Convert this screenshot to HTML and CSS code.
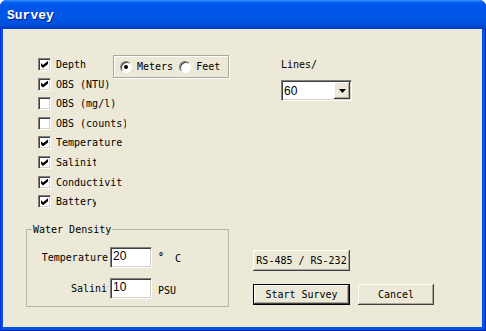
FILE: index.html
```html
<!DOCTYPE html>
<html lang="en">
<head>
    <meta charset="UTF-8"/>
    <title>Survey</title>
    <link rel="stylesheet" href="styles.css">
</head>
<body>
    <div class="window">
        <div class="titlebar"><span class="title">Survey</span></div>
        <div class="client">
            <div class="left">
                <div class="top">
                    <ul class="checks">
                        <li class="check on"><span class="box"></span><span class="label">Depth</span></li>
                        <li class="check on"><span class="box"></span><span class="label">OBS (NTU)</span></li>
                        <li class="check"><span class="box"></span><span class="label">OBS (mg/l)</span></li>
                        <li class="check"><span class="box"></span><span class="label clip-counts">OBS (counts)</span></li>
                        <li class="check on"><span class="box"></span><span class="label">Temperature</span></li>
                        <li class="check on"><span class="box"></span><span class="label clip-short">Salinity</span></li>
                        <li class="check on"><span class="box"></span><span class="label clip-long">Conductivity</span></li>
                        <li class="check on"><span class="box"></span><span class="label clip-short">Battery</span></li>
                    </ul>
                    <div class="units">
                        <span class="radio on"></span><span class="radio-label">Meters</span>
                        <span class="radio feet"></span><span class="radio-label">Feet</span>
                    </div>
                </div>

                <fieldset class="density">
                    <legend>Water Density</legend>
                    <div class="density-grid">
                        <span class="field-label">Temperature</span>
                        <span class="field">20</span>
                        <span class="unit"><span class="deg">°</span>C</span>

                        <span class="field-label"><span class="clip-salinity">Salinity</span></span>
                        <span class="field">10</span>
                        <span class="unit unit-low">PSU</span>
                    </div>
                </fieldset>
            </div>

            <div class="right">
                <div class="lines">
                    <div class="lines-label">Lines/</div>
                    <div class="combo">
                        <span class="combo-value">60</span>
                        <span class="combo-drop">
                            <svg width="7" height="4" viewBox="0 0 7 4"><path d="M0 0h7L3.5 4z" fill="#000"/></svg>
                        </span>
                    </div>
                </div>

                <div class="buttons">
                    <button class="btn btn-wide">RS-485 / RS-232</button>
                    <div class="btn-row">
                        <button class="btn btn-default">Start Survey</button>
                        <button class="btn btn-cancel">Cancel</button>
                    </div>
                </div>
            </div>
        </div>
    </div>
</body>
</html>
```

FILE: styles.css
```css
body {
    margin: 0;
    background: #fff;
    font-family: "DejaVu Sans Mono", monospace;
    font-size: 10px;
    color: #000;
}

.window {
    width: 486px;
    height: 331px;
    display: flex;
    flex-direction: column;
    background: #0054e3;
    border-radius: 7px 7px 0 0;
    box-shadow: inset 1px 0 #0831d9, inset -1px 0 #001ea0, inset 0 -1px #001ea0;
}

.titlebar {
    height: 29px;
    flex: none;
    display: flex;
    align-items: center;
    padding: 2px 0 0 7px;
    box-sizing: border-box;
    border-radius: 7px 7px 0 0;
    background: linear-gradient(to bottom,
        #3d95ff 0, #0a66f5 2px, #0058ee 4px, #0055e8 10px,
        #0056e6 18px, #004fdc 24px, #0044cf 27px, #003dc0 29px);
}

.title {
    font-family: "Liberation Mono", monospace;
    font-weight: bold;
    font-size: 13px;
    color: #fff;
    text-shadow: 1px 1px #0a1a8a;
}

.client {
    flex: 1;
    margin: 0 4px 4px 3px;
    background: #ece9d8;
    display: flex;
}

/* left side: checkboxes, units, water density */
.left {
    width: 237px;
    padding-left: 23px;
    box-sizing: border-box;
}

.top {
    display: flex;
    align-items: flex-start;
    padding: 29px 0 0 12px;
}

.checks {
    list-style: none;
    margin: 0;
    padding: 0;
    width: 75px;
    flex: none;
}

.check {
    height: 19.6px;
    display: flex;
    align-items: flex-start;
}

.box {
    width: 13px;
    height: 13px;
    flex: none;
    box-sizing: border-box;
    background: #fff;
    border: 1px solid;
    border-color: #808080 #fff #fff #808080;
    box-shadow: inset 1px 1px #404040, inset -1px -1px #d4d0c8;
    position: relative;
}

.check.on .box::after {
    content: "";
    position: absolute;
    left: 2px;
    top: 2px;
    width: 7px;
    height: 7px;
    background: #000;
    clip-path: polygon(0 28%, 28% 57%, 100% 0, 100% 43%, 28% 100%, 0 71%);
}

.label {
    flex: none;
    margin-left: 5px;
    line-height: 13px;
    white-space: nowrap;
    overflow: hidden;
}

.clip-short { width: 40px; }
.clip-long { width: 66px; }
.clip-counts { width: 70px; }

.units {
    margin-top: -3px;
    width: 116px;
    height: 23px;
    flex: none;
    box-sizing: border-box;
    border: 1px solid #aca899;
    box-shadow: inset 1px 1px #fff, 1px 1px #fff;
    display: flex;
    align-items: center;
    padding-left: 6px;
}

.radio {
    width: 12px;
    height: 12px;
    flex: none;
    box-sizing: border-box;
    border-radius: 50%;
    background: #fff;
    border: 1px solid;
    border-color: #808080 #fff #fff #808080;
    box-shadow: inset 1px 1px #404040;
    display: flex;
    align-items: center;
    justify-content: center;
}

.radio.on::after {
    content: "";
    width: 4px;
    height: 4px;
    border-radius: 50%;
    background: #000;
}

.radio.feet {
    margin-left: 6px;
}

.radio-label {
    margin-left: 5px;
    line-height: 13px;
}

.density {
    margin: 9px 0 0;
    padding: 11px 0 7px;
    width: 203px;
    box-sizing: border-box;
    border: 1px solid #b8b5a6;
    min-inline-size: 0;
}

.density legend {
    margin-left: 5px;
    padding: 0 1px;
    line-height: 12px;
}

.density-grid {
    display: grid;
    grid-template-columns: 83px 42px auto;
    row-gap: 10px;
    align-items: center;
}

.field-label {
    justify-self: end;
    padding-right: 2px;
    line-height: 13px;
    white-space: nowrap;
}

.clip-salinity {
    display: block;
    width: 37px;
    overflow: hidden;
}

.field {
    height: 21px;
    box-sizing: border-box;
    background: #fff;
    border: 1px solid;
    border-color: #808080 #fff #fff #808080;
    box-shadow: inset 1px 1px #404040, inset -1px -1px #d4d0c8;
    font-family: "Liberation Sans", sans-serif;
    font-size: 12px;
    line-height: 17px;
    padding-left: 2px;
}

.unit {
    margin-left: 6px;
    white-space: nowrap;
}

.deg {
    display: inline-block;
    width: 17px;
    vertical-align: 2px;
    font-weight: bold;
}

.unit-low {
    padding-top: 4px;
}

/* right side: lines combo and buttons */
.right {
    flex: 1;
    padding: 29px 0 0 13px;
}

.lines {
    margin-left: 28px;
}

.lines-label {
    line-height: 13px;
}

.combo {
    margin-top: 9px;
    width: 71px;
    height: 21px;
    box-sizing: border-box;
    background: #fff;
    border: 1px solid;
    border-color: #808080 #fff #fff #808080;
    box-shadow: inset 1px 1px #404040, inset -1px -1px #d4d0c8;
    display: flex;
    align-items: center;
    padding: 1px 1px 1px 2px;
}

.combo-value {
    flex: 1;
    font-family: "Liberation Sans", sans-serif;
    font-size: 12px;
}

.combo-drop {
    width: 16px;
    height: 17px;
    box-sizing: border-box;
    background: #ece9d8;
    box-shadow: inset -1px -1px #404040, inset 1px 1px #fff, inset -2px -2px #aca899;
    display: flex;
    align-items: center;
    justify-content: center;
}

.buttons {
    margin-top: 149px;
}

.btn {
    display: block;
    height: 21px;
    padding: 0;
    font-family: "DejaVu Sans Mono", monospace;
    font-size: 10px;
    color: #000;
    background: #ece9d8;
    border: none;
    box-shadow: inset -1px -1px #404040, inset 1px 1px #fff, inset -2px -2px #aca899;
}

.btn-wide {
    width: 97px;
}

.btn-row {
    display: flex;
    gap: 8px;
    margin-top: 13px;
}

.btn-default {
    width: 97px;
    border: 1px solid #000;
}

.btn-cancel {
    width: 76px;
}
```
